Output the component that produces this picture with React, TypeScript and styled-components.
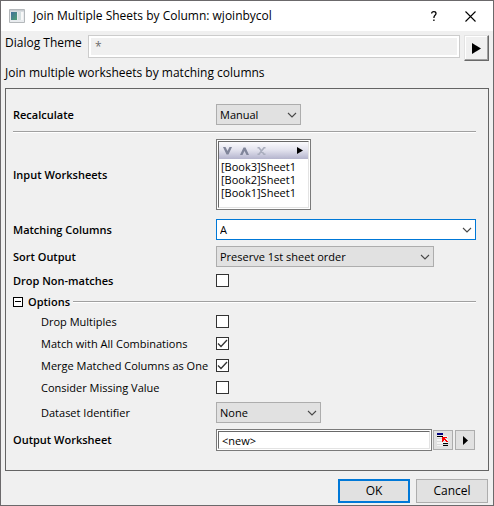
import React, { useId, useState } from "react";
import styled, { createGlobalStyle, css } from "styled-components";

const GlobalStyle = createGlobalStyle`
  *, *::before, *::after { box-sizing: border-box; }
  html, body, #root { height: 100%; }
  body {
    margin: 0;
    background: #f0f0f0;
    color: #000;
    font: 12px/16px "Open Sans", "Noto Sans", sans-serif;
  }
  button, input, select { font: inherit; color: inherit; margin: 0; border-radius: 0; }
  svg { display: block; }
`;

const Dialog = styled.main`
  min-height: 100%;
  display: flex;
  flex-direction: column;
  border: 1px solid #6b696b;
  background: #f0f0f0;
`;

const TitleBar = styled.header`
  display: flex;
  align-items: center;
  height: 30px;
  padding: 0 8px;
  background: #fff;
`;

const Title = styled.h1`
  flex: 1;
  margin: 0 0 0 8px;
  font-size: 12px;
  font-weight: 400;
`;

const CaptionButton = styled.button`
  display: grid;
  place-items: center;
  width: 45px;
  height: 28px;
  padding: 0;
  border: 0;
  background: transparent;
  &:last-child { width: 29px; }
`;

const ThemeRow = styled.div`
  display: flex;
  align-items: flex-start;
  gap: 4px;
  padding: 4px 4px 0;
`;

const ThemeLabel = styled.label`
  width: 79px;
`;

const ThemeInput = styled.input`
  flex: 1;
  min-width: 0;
  height: 23px;
  padding: 0 6px;
  border: 1px solid #ccc;
  outline: 2px solid #fff;
  outline-offset: -3px;
  background: #f0f0f0;
  color: #6d6d6d;
`;

const RaisedButton = styled.button`
  display: grid;
  place-items: center;
  width: 25px;
  height: 26px;
  padding: 0;
  border: 1px solid;
  border-color: #e3e3e3 #696969 #696969 #e3e3e3;
  box-shadow: inset -1px -1px #a0a0a0, inset 1px 1px #fff;
  background: #f0f0f0;
`;

const Description = styled.p`
  margin: 4px 4px 7px;
`;

const Panel = styled.form`
  margin: 0 4px;
  padding: 12px 12px 16px 7px;
  border: 1px solid #646464;
  font-size: 11px;
`;

const FieldRow = styled.div<{ $indent?: boolean }>`
  display: grid;
  grid-template-columns: 203px minmax(0, 1fr);
  align-items: center;
  padding: 3px 0;
  > :first-child {
    font-weight: ${(p) => (p.$indent ? 400 : 600)};
    padding-left: ${(p) => (p.$indent ? 28 : 0)}px;
    white-space: nowrap;
  }
`;

const CheckRow = styled(FieldRow)`
  height: 22px;
  padding: 0 0 1px;
`;

const ListRow = styled(FieldRow)`
  margin-bottom: 3px;
`;

const Rule = styled.hr`
  flex: 1;
  height: 2px;
  margin: 3px 0;
  border: 0;
  border-top: 1px solid #a0a0a0;
  background: #fff;
`;

const SelectShell = styled.span<{ $width: number }>`
  display: grid;
  width: ${(p) => p.$width}px;
  max-width: 100%;
  height: 21px;
  align-items: center;
  > * { grid-area: 1 / 1; }
  > svg { justify-self: end; margin-right: 4px; pointer-events: none; }
`;

const SelectBox = styled.select`
  appearance: none;
  width: 100%;
  height: 21px;
  padding: 0 20px 0 3px;
  border: 1px solid #adadad;
  background: #e1e1e1;
`;

const Combo = styled.div`
  display: flex;
  height: 21px;
  border: 1px solid #0078d7;
  background: #fff;
`;

const ComboInput = styled.input`
  flex: 1;
  min-width: 0;
  padding: 0 3px;
  border: 0;
  outline: 0;
  background: transparent;
`;

const ComboButton = styled.button`
  display: grid;
  place-items: center;
  width: 17px;
  padding: 0;
  border: 0;
  background: transparent;
`;

const sunken = css`
  border: 1px solid #7a7a7a;
  padding: 1px;
  background: #fff;
`;

const sunkenInner = css`
  border: 1px solid;
  border-color: #696969 #e3e3e3 #e3e3e3 #696969;
`;

const ListFrame = styled.div`
  ${sunken}
  width: 95px;
  height: 71px;
`;

const ListInner = styled.div`
  ${sunkenInner}
  height: 100%;
`;

const ListTools = styled.div`
  display: flex;
  align-items: center;
  height: 17px;
  background: linear-gradient(#fafafd, #e4e4ef 45%, #b4b4cd);
`;

const ToolButton = styled.button`
  display: grid;
  place-items: center;
  width: 17px;
  height: 17px;
  padding: 0;
  border: 0;
  background: transparent;
  &:last-child { margin-left: auto; }
`;

const SheetList = styled.ul`
  margin: 0;
  padding: 1px 2px;
  list-style: none;
  line-height: 13px;
`;

const Check = styled.input`
  appearance: none;
  width: 13px;
  height: 13px;
  border: 1px solid #333;
  background: #fff;
`;

const CheckShell = styled.span`
  display: grid;
  width: 13px;
  height: 13px;
  > * { grid-area: 1 / 1; }
  > svg { pointer-events: none; }
`;

const OptionsHeading = styled.div`
  display: flex;
  align-items: center;
  height: 19px;
`;

const Toggle = styled.button`
  display: flex;
  align-items: center;
  gap: 5px;
  padding: 0;
  margin-right: 3px;
  border: 0;
  background: transparent;
  font-weight: 600;
`;

const OutputLine = styled.div`
  display: flex;
  align-items: center;
  padding-right: 1px;
`;

const OutputFrame = styled.div`
  ${sunken}
  flex: 1;
  min-width: 0;
  height: 22px;
`;

const OutputInput = styled.input`
  ${sunkenInner}
  display: block;
  width: 100%;
  height: 18px;
  padding: 0 3px;
  outline: 0;
  background: #fff;
`;

const SmallButton = styled.button`
  display: grid;
  place-items: center;
  width: 20px;
  height: 20px;
  padding: 0;
  margin-left: 1px;
  border: 1px solid #adadad;
  background: #e1e1e1;
  & + & { margin-left: 2px; }
`;

const Footer = styled.footer`
  display: flex;
  justify-content: flex-end;
  gap: 6px;
  padding: 8px 5px 2px;
`;

const PushButton = styled.button<{ $primary?: boolean }>`
  width: 72px;
  height: 24px;
  padding: 0;
  border: ${(p) => (p.$primary ? "2px solid #0078d7" : "1px solid #adadad")};
  background: #e1e1e1;
`;

const Chevron = () => (
  <svg width="10" height="6" viewBox="0 0 10 6" aria-hidden="true">
    <path d="M1 1l4 4 4-4" fill="none" stroke="#484848" strokeWidth="1.1" />
  </svg>
);

const Triangle = ({ width = 5, height = 9 }: { width?: number; height?: number }) => (
  <svg width={width} height={height} viewBox="0 0 5 9" preserveAspectRatio="none" aria-hidden="true">
    <path d="M0 0l5 4.5L0 9z" fill="#000" />
  </svg>
);

const AppIcon = () => (
  <svg width="16" height="14" viewBox="0 0 16 14" aria-hidden="true">
    <defs>
      <linearGradient id="pane" x1="0" y1="0" x2="1" y2="1">
        <stop offset="0" stopColor="#3f6f9c" />
        <stop offset="1" stopColor="#4fa073" />
      </linearGradient>
    </defs>
    <path d="M.5 .5h15v13H.5z" fill="#e9ecef" stroke="#b4b8bb" />
    <path d="M1 1h14v1.500H1z" fill="#c9ced2" />
    <path d="M2 3h6v8H2z" fill="url(#pane)" />
    <path d="M9 3h3v8H9z" fill="#d5dfe0" />
    <path d="M12 3h2v8h-2z" fill="#f8f8f8" />
  </svg>
);

const RangeIcon = () => (
  <svg width="12" height="14" viewBox="0 0 12 14" shapeRendering="crispEdges" aria-hidden="true">
    <path d="M0 3h11v10H0z" fill="#f4f4f4" />
    <path d="M0 5h11M0 8h11M0 11h11" transform="translate(0 .5)" stroke="#d8d8d8" />
    <path d="M0 0h6v2H0z" fill="#000080" />
    <path d="M0 3h6v1H0zM6 10h5v1H6zM6 12h5v1H6z" fill="#000" />
    <path d="M5 4h5v1H8v1h1v1h1v1h1v1H9V8H8V7H7v1H6v1H5z" fill="#f00" />
  </svg>
);

type SelectFieldProps = { label: string; options: string[]; width: number; indent?: boolean };

function SelectField({ label, options, width, indent }: SelectFieldProps) {
  const id = useId();
  return (
    <FieldRow $indent={indent}>
      <label htmlFor={id}>{label}</label>
      <SelectShell $width={width}>
        <SelectBox id={id}>
          {options.map((o) => <option key={o}>{o}</option>)}
        </SelectBox>
        <Chevron />
      </SelectShell>
    </FieldRow>
  );
}

type CheckFieldProps = { label: string; initial?: boolean; indent?: boolean };

function CheckField({ label, initial = false, indent }: CheckFieldProps) {
  const id = useId();
  const [on, setOn] = useState(initial);
  return (
    <CheckRow $indent={indent}>
      <label htmlFor={id}>{label}</label>
      <CheckShell>
        <Check id={id} type="checkbox" checked={on} onChange={(e) => setOn(e.target.checked)} />
        {on && (
          <svg width="13" height="13" viewBox="0 0 13 13" aria-hidden="true">
            <path d="M2 6.500l3 3 6-6.500" fill="none" stroke="#333" strokeWidth="1.3" />
          </svg>
        )}
      </CheckShell>
    </CheckRow>
  );
}

export default function App() {
  const [open, setOpen] = useState(true);
  return (
    <>
      <GlobalStyle />
      <Dialog>
        <TitleBar>
          <AppIcon />
          <Title>Join Multiple Sheets by Column: wjoinbycol</Title>
          <CaptionButton aria-label="Help">
            <svg width="6" height="10" viewBox="0 0 6 10" aria-hidden="true">
              <path d="M.7 2.500V1.800Q1 .7 2.800.7q2.200 0 2.200 1.800 0 1-1.200 1.900Q2.900 5.200 2.900 6.900M2.900 8.500V10" fill="none" stroke="#000" strokeWidth="1.3" />
            </svg>
          </CaptionButton>
          <CaptionButton aria-label="Close">
            <svg width="11" height="11" viewBox="0 0 11 11" aria-hidden="true">
              <path d="M.5 .5l10 10M10.500 .5l-10 10" stroke="#000" strokeWidth="1.1" />
            </svg>
          </CaptionButton>
        </TitleBar>

        <ThemeRow>
          <ThemeLabel htmlFor="theme">Dialog Theme</ThemeLabel>
          <ThemeInput id="theme" defaultValue="*" readOnly />
          <RaisedButton aria-label="Theme menu"><Triangle width={9} height={11} /></RaisedButton>
        </ThemeRow>
        <Description>Join multiple worksheets by matching columns</Description>

        <Panel onSubmit={(e) => e.preventDefault()} id="join">
          <SelectField label="Recalculate" options={["Manual", "Auto", "None"]} width={85} />
          <Rule />
          <ListRow>
            <span id="sheets">Input Worksheets</span>
            <ListFrame>
              <ListInner>
                <ListTools>
                  <ToolButton type="button" aria-label="Move down">
                    <svg width="9" height="8" viewBox="0 0 9 8"><path d="M0 0h2.500l2 4 2-4H9L5.500 7.500h-2z" fill="#80859a" /></svg>
                  </ToolButton>
                  <ToolButton type="button" aria-label="Move up">
                    <svg width="9" height="8" viewBox="0 0 9 8"><path d="M0 8h2.500l2-4 2 4H9L5.500 .5h-2z" fill="#80859a" /></svg>
                  </ToolButton>
                  <ToolButton type="button" aria-label="Remove">
                    <svg width="9" height="8" viewBox="0 0 9 8"><path d="M.5 .7h1.500l5 6.600h1.500M8.500 .7H7L2 7.300H.5" fill="none" stroke="#a9adbd" strokeWidth="1.500" /></svg>
                  </ToolButton>
                  <ToolButton type="button" aria-label="Add sheets"><Triangle width={6} height={7} /></ToolButton>
                </ListTools>
                <SheetList aria-labelledby="sheets">
                  <li>[Book3]Sheet1</li>
                  <li>[Book2]Sheet1</li>
                  <li>[Book1]Sheet1</li>
                </SheetList>
              </ListInner>
            </ListFrame>
          </ListRow>
          <FieldRow>
            <label htmlFor="match">Matching Columns</label>
            <Combo>
              <ComboInput id="match" defaultValue="A" />
              <ComboButton type="button" aria-label="Show columns"><Chevron /></ComboButton>
            </Combo>
          </FieldRow>
          <SelectField label="Sort Output" options={["Preserve 1st sheet order", "Ascending", "Descending"]} width={218} />
          <CheckField label="Drop Non-matches" />

          <OptionsHeading>
            <Toggle type="button" aria-expanded={open} onClick={() => setOpen(!open)}>
              <svg width="10" height="10" viewBox="0 0 10 10" shapeRendering="crispEdges" aria-hidden="true">
                <path d="M.5 .5h9v9h-9z" fill="#fff" stroke="#000" />
                <path d={open ? "M2 4.500h6" : "M2 4.500h6M5 2v6"} stroke="#000" />
              </svg>
              Options
            </Toggle>
            <Rule />
          </OptionsHeading>
          {open && (
            <>
              <CheckField indent label="Drop Multiples" />
              <CheckField indent initial label="Match with All Combinations" />
              <CheckField indent initial label="Merge Matched Columns as One" />
              <CheckField indent label="Consider Missing Value" />
              <SelectField indent label="Dataset Identifier" options={["None", "Book Name", "Sheet Name"]} width={105} />
            </>
          )}

          <FieldRow>
            <label htmlFor="output">Output Worksheet</label>
            <OutputLine>
              <OutputFrame><OutputInput id="output" defaultValue="<new>" /></OutputFrame>
              <SmallButton type="button" aria-label="Select range"><RangeIcon /></SmallButton>
              <SmallButton type="button" aria-label="Output menu"><Triangle /></SmallButton>
            </OutputLine>
          </FieldRow>
        </Panel>

        <Footer>
          <PushButton $primary type="submit" form="join">OK</PushButton>
          <PushButton type="button">Cancel</PushButton>
        </Footer>
      </Dialog>
    </>
  );
}
